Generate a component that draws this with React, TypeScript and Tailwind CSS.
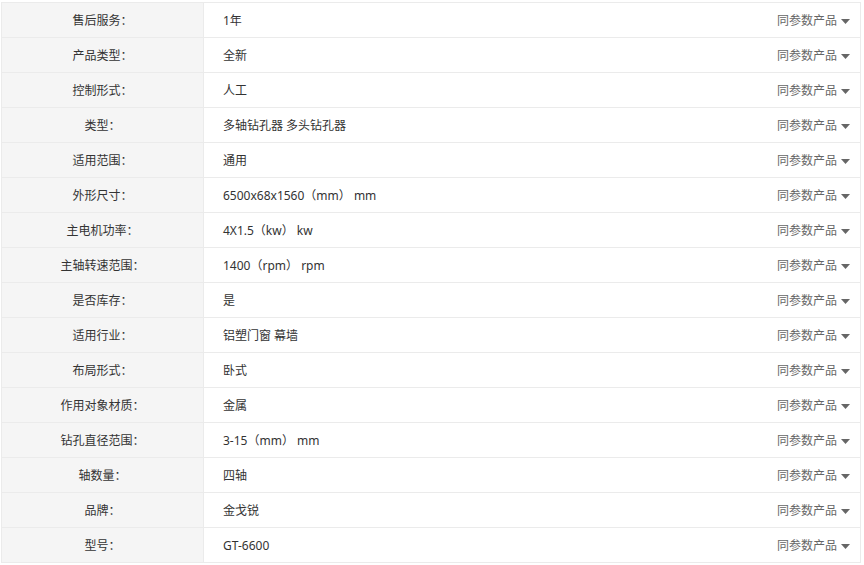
import React from 'react';

const rows: [string, string][] = [
  ['售后服务', '1年'],
  ['产品类型', '全新'],
  ['控制形式', '人工'],
  ['类型', '多轴钻孔器 多头钻孔器'],
  ['适用范围', '通用'],
  ['外形尺寸', '6500x68x1560（mm） mm'],
  ['主电机功率', '4X1.5（kw） kw'],
  ['主轴转速范围', '1400（rpm） rpm'],
  ['是否库存', '是'],
  ['适用行业', '铝塑门窗 幕墙'],
  ['布局形式', '卧式'],
  ['作用对象材质', '金属'],
  ['钻孔直径范围', '3-15（mm） mm'],
  ['轴数量', '四轴'],
  ['品牌', '金戈锐'],
  ['型号', 'GT-6600'],
];

const App: React.FC = () => {
  return (
    <div className="w-[864px] h-[565px] bg-white pt-[2px] pl-[1px] text-[12px] text-[#333]" style={{ fontFamily: '"Noto Sans", "Noto Sans CJK SC", sans-serif' }}>
      <div className="w-[860px] border-t border-l border-r border-[#ebebeb]">
        {rows.map(([label, value]) => (
          <div key={label} className="flex h-[35px] border-b border-[#ebebeb]">
            <div className="w-[202px] pt-[2px] bg-[#f5f5f5] border-r border-[#ebebeb] flex items-center justify-center">
              {label}：
            </div>
            <div className="flex-1 flex items-center pt-[2px] pl-[19px] pr-[10px]">
              <span className="flex-1">{value}</span>
              <span className="flex items-center text-[#666]">
                同参数产品
                <svg className="ml-[4px] w-[9px] h-[5px]" viewBox="0 0 9 5">
                  <path d="M0 0h9L4.5 5z" fill="#666" />
                </svg>
              </span>
            </div>
          </div>
        ))}
      </div>
    </div>
  );
};

export default App;
